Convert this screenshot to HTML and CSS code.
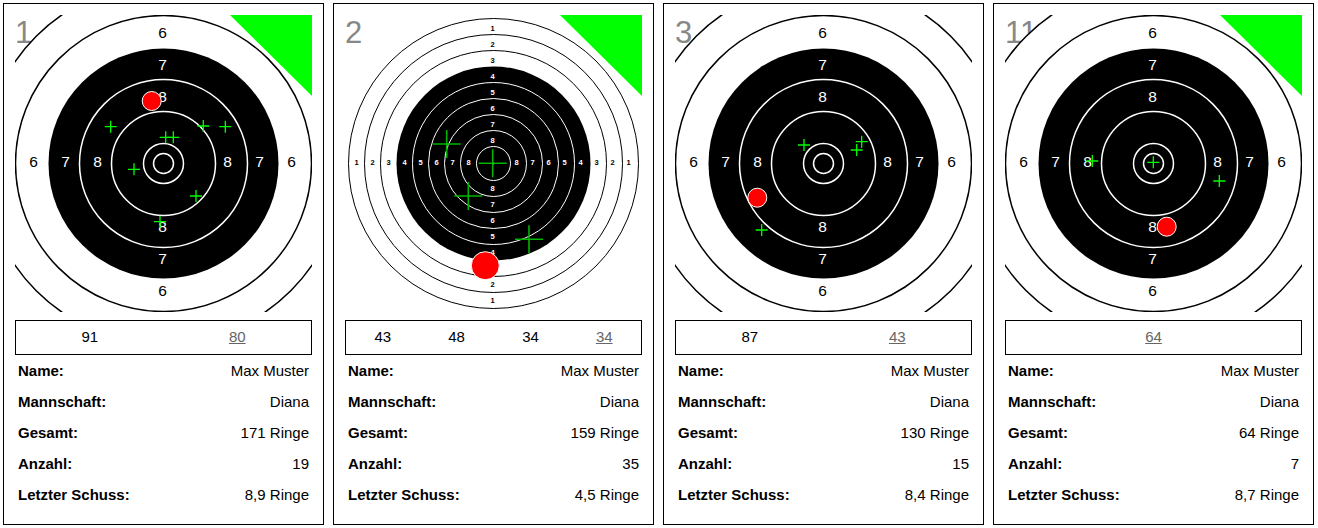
FILE: index.html
```html
<!DOCTYPE html>
<html lang="de">

<head>
    <meta charset="UTF-8">
    <meta name="viewport" content="width=device-width, initial-scale=1.0">
    <title>Schießstand Anzeige</title>
    <link rel="stylesheet" href="styles.css">
</head>

<body>

    <!-- shared drawings for the target faces and hits -->
    <svg class="defs" aria-hidden="true">
        <defs>
            <g id="face-zoom">
                <circle class="ring-line" cx="148.5" cy="148.5" r="180" />
                <circle class="ring-line" cx="148.5" cy="148.5" r="148" />
                <circle class="black" cx="148.5" cy="148.5" r="115" />
                <circle class="ring-white" cx="148.5" cy="148.5" r="84" />
                <circle class="ring-white" cx="148.5" cy="148.5" r="52" />
                <circle class="ring-white" cx="148.5" cy="148.5" r="20" />
                <circle class="ring-white" cx="148.5" cy="148.5" r="10" />
                <g class="num-big">
                    <text x="147.5" y="22.5">6</text>
                    <text x="147.5" y="280.5">6</text>
                    <text x="18.5" y="151.5">6</text>
                    <text x="276.5" y="151.5">6</text>
                    <g class="on-black">
                        <text x="147.5" y="54.5">7</text>
                        <text x="147.5" y="86.5">8</text>
                        <text x="147.5" y="216.5">8</text>
                        <text x="147.5" y="248.5">7</text>
                        <text x="50.5" y="151.5">7</text>
                        <text x="82.5" y="151.5">8</text>
                        <text x="212.5" y="151.5">8</text>
                        <text x="244.5" y="151.5">7</text>
                    </g>
                </g>
            </g>

            <g id="face-full">
                <circle class="ring-thin" cx="148.5" cy="148.5" r="145" />
                <circle class="ring-thin" cx="148.5" cy="148.5" r="129" />
                <circle class="ring-thin" cx="148.5" cy="148.5" r="113" />
                <circle class="black" cx="148.5" cy="148.5" r="97" />
                <circle class="ring-thin-white" cx="148.5" cy="148.5" r="81" />
                <circle class="ring-thin-white" cx="148.5" cy="148.5" r="65" />
                <circle class="ring-thin-white" cx="148.5" cy="148.5" r="49" />
                <circle class="ring-thin-white" cx="148.5" cy="148.5" r="33" />
                <circle class="ring-thin-white" cx="148.5" cy="148.5" r="17" />
                <circle class="white-dot" cx="148.5" cy="148.5" r="1" />
                <g class="num-small">
                    <text x="147.5" y="15.5">1</text>
                    <text x="147.5" y="31.5">2</text>
                    <text x="147.5" y="47.5">3</text>
                    <text x="147.5" y="287.5">1</text>
                    <text x="147.5" y="271.5">2</text>
                    <text x="147.5" y="255.5">3</text>
                    <text x="11.5" y="149.5">1</text>
                    <text x="27.5" y="149.5">2</text>
                    <text x="43.5" y="149.5">3</text>
                    <text x="283.5" y="149.5">1</text>
                    <text x="267.5" y="149.5">2</text>
                    <text x="251.5" y="149.5">3</text>
                    <g class="on-black">
                        <text x="147.5" y="63.5">4</text>
                        <text x="147.5" y="79.5">5</text>
                        <text x="147.5" y="95.5">6</text>
                        <text x="147.5" y="111.5">7</text>
                        <text x="147.5" y="127.5">8</text>
                        <text x="147.5" y="175.5">8</text>
                        <text x="147.5" y="191.5">7</text>
                        <text x="147.5" y="207.5">6</text>
                        <text x="147.5" y="223.5">5</text>
                        <text x="147.5" y="239.5">4</text>
                        <text x="59.5" y="149.5">4</text>
                        <text x="75.5" y="149.5">5</text>
                        <text x="91.5" y="149.5">6</text>
                        <text x="107.5" y="149.5">7</text>
                        <text x="123.5" y="149.5">8</text>
                        <text x="171.5" y="149.5">8</text>
                        <text x="187.5" y="149.5">7</text>
                        <text x="203.5" y="149.5">6</text>
                        <text x="219.5" y="149.5">5</text>
                        <text x="235.5" y="149.5">4</text>
                    </g>
                </g>
            </g>

            <path id="hit-small" d="M-6 0H6M0-6V6" />
            <path id="hit-large" d="M-14 0H14M0-14V14" />
        </defs>
    </svg>

    <div class="board">

        <div class="card">
            <div class="target">
                <span class="lane">1</span>
                <svg class="face" viewBox="0 0 297 297">
                    <use href="#face-zoom" />
                    <g class="hits">
                        <use href="#hit-small" x="95.7" y="111.7" />
                        <use href="#hit-small" x="150.7" y="122.3" />
                        <use href="#hit-small" x="158.3" y="122.3" />
                        <use href="#hit-small" x="188.3" y="111" />
                        <use href="#hit-small" x="210.3" y="111.7" />
                        <use href="#hit-small" x="119" y="154.3" />
                        <use href="#hit-small" x="181" y="181" />
                        <use href="#hit-small" x="145" y="206.7" />
                    </g>
                    <circle class="last-hit" cx="136.7" cy="86" r="9.5" />
                    <polygon class="flag" points="215,0 297,0 297,81" />
                </svg>
            </div>
            <table class="series">
                <tr>
                    <td>91</td>
                    <td class="current">80</td>
                </tr>
            </table>
            <table class="info">
                <tr><th>Name:</th><td>Max Muster</td></tr>
                <tr><th>Mannschaft:</th><td>Diana</td></tr>
                <tr><th>Gesamt:</th><td>171 Ringe</td></tr>
                <tr><th>Anzahl:</th><td>19</td></tr>
                <tr><th>Letzter Schuss:</th><td>8,9 Ringe</td></tr>
            </table>
        </div>

        <div class="card">
            <div class="target">
                <span class="lane">2</span>
                <svg class="face" viewBox="0 0 297 297">
                    <use href="#face-full" />
                    <g class="hits hits-large">
                        <use href="#hit-large" x="101.7" y="129" />
                        <use href="#hit-large" x="147.7" y="148.3" />
                        <use href="#hit-large" x="123.3" y="181" />
                        <use href="#hit-large" x="184" y="224.3" />
                    </g>
                    <circle class="last-hit" cx="140.3" cy="250.7" r="14" />
                    <polygon class="flag" points="215,0 297,0 297,81" />
                </svg>
            </div>
            <table class="series">
                <tr>
                    <td>43</td>
                    <td>48</td>
                    <td>34</td>
                    <td class="current">34</td>
                </tr>
            </table>
            <table class="info">
                <tr><th>Name:</th><td>Max Muster</td></tr>
                <tr><th>Mannschaft:</th><td>Diana</td></tr>
                <tr><th>Gesamt:</th><td>159 Ringe</td></tr>
                <tr><th>Anzahl:</th><td>35</td></tr>
                <tr><th>Letzter Schuss:</th><td>4,5 Ringe</td></tr>
            </table>
        </div>

        <div class="card">
            <div class="target">
                <span class="lane">3</span>
                <svg class="face" viewBox="0 0 297 297">
                    <use href="#face-zoom" />
                    <g class="hits">
                        <use href="#hit-small" x="129" y="130" />
                        <use href="#hit-small" x="181.7" y="135" />
                        <use href="#hit-small" x="186.7" y="126.7" />
                        <use href="#hit-small" x="86.7" y="215" />
                    </g>
                    <circle class="last-hit" cx="82.3" cy="182.7" r="9.5" />
                </svg>
            </div>
            <table class="series">
                <tr>
                    <td>87</td>
                    <td class="current">43</td>
                </tr>
            </table>
            <table class="info">
                <tr><th>Name:</th><td>Max Muster</td></tr>
                <tr><th>Mannschaft:</th><td>Diana</td></tr>
                <tr><th>Gesamt:</th><td>130 Ringe</td></tr>
                <tr><th>Anzahl:</th><td>15</td></tr>
                <tr><th>Letzter Schuss:</th><td>8,4 Ringe</td></tr>
            </table>
        </div>

        <div class="card">
            <div class="target">
                <span class="lane">11</span>
                <svg class="face" viewBox="0 0 297 297">
                    <use href="#face-zoom" />
                    <g class="hits">
                        <use href="#hit-small" x="148.3" y="147.3" />
                        <use href="#hit-small" x="87.3" y="146" />
                        <use href="#hit-small" x="214.3" y="166" />
                    </g>
                    <circle class="last-hit" cx="161.7" cy="211.7" r="9.5" />
                    <polygon class="flag" points="215,0 297,0 297,81" />
                </svg>
            </div>
            <table class="series">
                <tr>
                    <td class="current">64</td>
                </tr>
            </table>
            <table class="info">
                <tr><th>Name:</th><td>Max Muster</td></tr>
                <tr><th>Mannschaft:</th><td>Diana</td></tr>
                <tr><th>Gesamt:</th><td>64 Ringe</td></tr>
                <tr><th>Anzahl:</th><td>7</td></tr>
                <tr><th>Letzter Schuss:</th><td>8,7 Ringe</td></tr>
            </table>
        </div>

    </div>

</body>

</html>
```

FILE: styles.css
```css
body {
    font-family: "Liberation Sans", Arial, sans-serif;
    margin: 0;
    padding: 3px;
    color: #000;
    background: #fff;
}

.defs {
    position: absolute;
    width: 0;
    height: 0;
    overflow: hidden;
}

.board {
    display: flex;
    gap: 9px;
}

.card {
    width: 321px;
    height: 522px;
    box-sizing: border-box;
    border: 1px solid #000;
    padding: 11px 11px 14px;
}

.target {
    position: relative;
    width: 297px;
    height: 297px;
}

.lane {
    position: absolute;
    left: 0;
    top: 3px;
    font-size: 31px;
    line-height: 30px;
    color: #888;
}

.face {
    position: relative;
    display: block;
    width: 297px;
    height: 297px;
    overflow: hidden;
}

/* target face */
.ring-line {
    fill: #fff;
    stroke: #000;
    stroke-width: 1.5;
}

.black {
    fill: #000;
}

.ring-white {
    fill: none;
    stroke: #fff;
    stroke-width: 1.5;
}

.ring-thin {
    fill: #fff;
    stroke: #000;
    stroke-width: 1;
}

.ring-thin-white {
    fill: none;
    stroke: #fff;
    stroke-width: 1;
}

.white-dot {
    fill: #fff;
}

.num-big {
    font-size: 15.5px;
    text-anchor: middle;
    fill: #000;
}

.num-small {
    font-size: 7.5px;
    font-weight: bold;
    text-anchor: middle;
    fill: #000;
}

.on-black {
    fill: #fff;
}

/* hits */
.hits {
    fill: none;
    stroke: #00ff00;
    stroke-width: 1.3;
}

.hits-large {
    stroke: #00b400;
    stroke-width: 1.6;
}

.last-hit {
    fill: #ff0000;
    stroke: #fff;
    stroke-width: 1;
}

.flag {
    fill: #00ff00;
}

/* series results */
.series {
    width: 100%;
    height: 35px;
    margin-top: 8px;
    border: 1px solid #000;
    border-collapse: collapse;
    table-layout: fixed;
}

.series td {
    padding: 0 0 3px;
    text-align: center;
    font-size: 15px;
}

.series .current {
    color: #666;
    text-decoration: underline;
}

/* shooter info */
.info {
    width: 100%;
    border-collapse: collapse;
    font-size: 15px;
}

.info tr {
    height: 31px;
}

.info th {
    padding: 0 3px 1px;
    text-align: left;
    font-weight: bold;
}

.info td {
    padding: 0 3px 1px;
    text-align: right;
}
```
